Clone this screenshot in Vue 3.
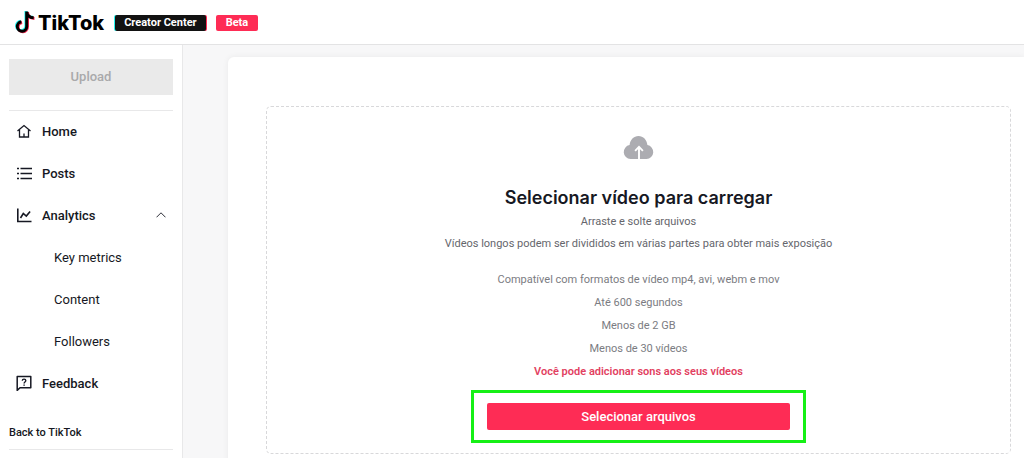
<script setup>
const metrics = ['Key metrics', 'Content', 'Followers']
const rules = [
  'Compatível com formatos de vídeo mp4, avi, webm e mov',
  'Até 600 segundos',
  'Menos de 2 GB',
  'Menos de 30 vídeos'
]
</script>

<template>
  <div class="page">
    <header class="topbar">
      <a class="brand" href="#" aria-label="TikTok Creator Center">
        <svg class="note" viewBox="0 0 20 24" aria-hidden="true">
          <g fill="none" stroke-width="3">
            <path stroke="#25f4ee" d="M10.900 1v14.800a4.700 4.700 0 1 1-5.400-4.600M10.900 1c.3 4 2.900 6 7 6.200" />
            <path stroke="#fe2c55" d="M12.500 2.200V17a4.700 4.700 0 1 1-5.400-4.600M12.500 2.200c.3 4 2.900 6 7 6.200" />
            <path stroke="#000" d="M11.700 1.600v14.800a4.700 4.700 0 1 1-5.400-4.600M11.700 1.600c.3 4 2.900 6 7 6.200" />
          </g>
        </svg>
        <span class="wordmark">TikTok</span>
      </a>
      <span class="tag creator">Creator Center</span>
      <span class="tag beta">Beta</span>
    </header>

    <div class="body">
      <aside class="sidebar">
        <button class="upload" type="button" disabled>Upload</button>
        <nav class="menu">
          <a class="item" href="#">
            <svg class="icon" viewBox="0 0 16 16" aria-hidden="true">
              <path d="M1.500 8 8 2.500 14.500 8M3.500 6.800V14h9V6.800M8 10.500V14" fill="none" stroke="currentColor" stroke-width="1.300" />
            </svg>
            Home
          </a>
          <a class="item" href="#">
            <svg class="icon" viewBox="0 0 16 16" aria-hidden="true">
              <path d="M1 3.500h2M1 8.500h2M1 13.500h2M4.500 3.500H16M4.500 8.500H16M4.500 13.500H16" fill="none" stroke="currentColor" stroke-width="1.600" />
            </svg>
            Posts
          </a>
          <a class="item" href="#">
            <svg class="icon" viewBox="0 0 16 16" aria-hidden="true">
              <path d="M1.800 1.500v13H15.500M4.500 11 7.300 6.500l3 2.600 3.800-4.600" fill="none" stroke="currentColor" stroke-width="1.600" />
            </svg>
            Analytics
            <svg class="chevron" viewBox="0 0 10 6" aria-hidden="true">
              <path d="M.5 5.300 5 .8l4.500 4.500" fill="none" stroke="currentColor" stroke-width=".9" />
            </svg>
          </a>
          <a v-for="m in metrics" :key="m" class="item sub" href="#">{{ m }}</a>
          <a class="item" href="#">
            <svg class="icon" viewBox="0 0 16 16" aria-hidden="true">
              <path d="M1.200 15.400V1.500h13.600v11.300H4z" fill="none" stroke="currentColor" stroke-width="1.500" stroke-linejoin="round" />
              <path d="M6.300 5.800c0-2.300 3.500-2.100 3.500-.2 0 1.400-1.700 1.400-1.700 2.800M8.100 9.400v1.300" fill="none" stroke="currentColor" stroke-width="1.400" />
            </svg>
            Feedback
          </a>
        </nav>
        <a class="back" href="#">Back to TikTok</a>
      </aside>

      <main class="content">
        <section class="card">
          <div class="dropzone">
            <svg class="cloud" viewBox="0 0 30 23" aria-hidden="true">
              <path fill="#acacb1" d="M7 23a7 7 0 0 1-.9-13.900C6.500 3.800 10.300 0 15 0s8.500 3.800 8.900 9.100A7 7 0 0 1 23 23z" />
              <path fill="none" stroke="#fff" stroke-width="1.900" d="M15.500 23V11.500M11.600 14.800l3.900-3.900 3.900 3.900" />
            </svg>
            <h1>Selecionar vídeo para carregar</h1>
            <p class="lead">Arraste e solte arquivos</p>
            <p class="lead">Vídeos longos podem ser divididos em várias partes para obter mais exposição</p>
            <ul class="rules">
              <li v-for="r in rules" :key="r">{{ r }}</li>
              <li class="sounds">Você pode adicionar sons aos seus vídeos</li>
            </ul>
            <div class="highlight">
              <button class="select" type="button">Selecionar arquivos</button>
            </div>
          </div>
        </section>
      </main>
    </div>
  </div>
</template>

<style>
body {
  margin: 0;
}
</style>

<style scoped>
.page {
  height: 100vh;
  overflow: hidden;
  display: flex;
  flex-direction: column;
  font-family: Roboto, "Liberation Sans", sans-serif;
  color: #161823;
  background: #fff;
}
.page * {
  box-sizing: border-box;
}
a {
  color: inherit;
  text-decoration: none;
}
.topbar {
  flex: none;
  display: flex;
  align-items: center;
  height: 45px;
  padding: 2px 15px 0;
  border-bottom: 1px solid #e3e3e4;
}
.brand {
  display: flex;
  align-items: center;
  gap: 3px;
  margin-right: 11px;
  color: #000;
}
.note {
  width: 20px;
  height: 24px;
  margin-bottom: 3px;
}
.wordmark {
  font: 800 20px/24px Inter, "Liberation Sans", sans-serif;
}
.tag {
  height: 16px;
  line-height: 16px;
  border-radius: 2px;
  color: #fff;
  font-size: 11px;
  font-weight: 700;
}
.creator {
  padding: 0 9px;
  margin-right: 10px;
  background: #121212;
  box-shadow: -1px 0 #25f4ee, 1px 0 #fe2c55;
}
.beta {
  padding: 0 10px;
  background: #fe2c55;
}
.body {
  flex: 1;
  display: flex;
  min-height: 0;
}
.sidebar {
  flex: none;
  width: 183px;
  padding: 14px 9px 0;
  border-right: 1px solid #e8e8e9;
}
.upload {
  display: block;
  width: 100%;
  height: 36px;
  border: 0;
  background: #eaeaea;
  color: #a9a9ab;
  font: 500 13px/16px Roboto, "Liberation Sans", sans-serif;
}
.menu {
  margin-top: 15px;
  border-top: 1px solid #e8e8e9;
}
.item {
  display: flex;
  align-items: center;
  gap: 10px;
  height: 42px;
  padding: 0 7px 2px;
  font-size: 13px;
  font-weight: 500;
}
.sub {
  padding-left: 45px;
  font-weight: 400;
}
.icon {
  width: 16px;
  height: 16px;
}
.chevron {
  width: 10px;
  height: 6px;
  margin-left: auto;
}
.back {
  display: block;
  padding: 20px 0 8px;
  border-bottom: 1px solid #e8e8e9;
  font-size: 11px;
  line-height: 16px;
  font-weight: 500;
}
.content {
  flex: 1;
  padding: 12px 0 0 45px;
  background: #f7f7f8;
}
.card {
  min-height: 100%;
  padding: 49px 13px 49px 38px;
  border-radius: 6px 0 0 0;
  background: #fff;
  box-shadow: 0 0 6px rgba(0, 0, 0, 0.06);
}
.dropzone {
  display: flex;
  flex-direction: column;
  align-items: center;
  padding: 29px 0 10px;
  border: 1px dashed #d8d8da;
  border-radius: 5px;
}
.cloud {
  width: 31px;
  height: 23px;
}
h1 {
  margin: 26px 0 0;
  font: 600 18px/26px Inter, "Liberation Sans", sans-serif;
}
.lead {
  margin: 0;
  font-size: 11px;
  line-height: 22px;
  color: #65666c;
}
.rules {
  margin: 13px 0 0;
  padding: 0;
  list-style: none;
  text-align: center;
  font-size: 11px;
  line-height: 23px;
  color: #7b7c82;
}
.sounds {
  color: #e2415f;
  font-weight: 600;
}
.highlight {
  width: 45%;
  margin-top: 7px;
  padding: 10px 13px;
  border: 3px solid #16f016;
}
.select {
  display: block;
  width: 100%;
  height: 27px;
  border: 0;
  border-radius: 2px;
  background: #fe2c55;
  color: #fff;
  font: 500 13px/16px Roboto, "Liberation Sans", sans-serif;
}
</style>
